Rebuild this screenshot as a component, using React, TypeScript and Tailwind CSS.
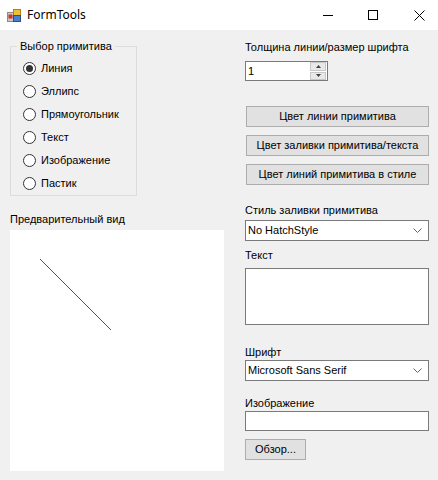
import React from "react";

function Radio({ label, checked }: { label: string; checked?: boolean }) {
  return (
    <div className="h-[23px] flex items-center">
      <div className="w-[13px] h-[13px] rounded-full border border-[#333333] bg-white flex items-center justify-center">
        {checked && <div className="w-[7px] h-[7px] rounded-full bg-[#333333]" />}
      </div>
      <span className="ml-[5px] text-[11px] leading-[13px]">{label}</span>
    </div>
  );
}

function Btn({ label, w }: { label: string; w: string }) {
  return (
    <div
      className={`${w} h-[21px] border border-[#adadad] bg-[#e1e1e1] flex items-center justify-center text-[11px] leading-[13px]`}
    >
      {label}
    </div>
  );
}

function Combo({ value }: { value: string }) {
  return (
    <div className="w-[184px] h-[21px] border border-[#7a7a7a] bg-white flex items-center justify-between pl-[2px] pr-[6px] text-[11px] leading-[13px]">
      <span>{value}</span>
      <svg width="9" height="5" viewBox="0 0 9 5">
        <path d="M0.5 0.5 L4.5 4.5 L8.5 0.5" fill="none" stroke="#606060" strokeWidth="1" />
      </svg>
    </div>
  );
}

export default function App() {
  return (
    <div
      className="w-[438px] h-[480px] bg-[#f0f0f0] flex flex-col text-black overflow-hidden"
      style={{ fontFamily: '"Liberation Sans", Arial, sans-serif' }}
    >
      {/* title bar */}
      <div className="h-[30px] bg-white flex items-center shrink-0">
        <svg className="ml-[7px]" width="14" height="13" viewBox="0 0 14 13">
          <rect x="0.5" y="3.5" width="7" height="9" fill="#c8c8c8" stroke="#8a8a8a" />
          <rect x="1.5" y="5.5" width="4" height="4" fill="#d83020" />
          <rect x="6.5" y="0.5" width="7" height="6" fill="#f0c030" stroke="#b08020" />
          <rect x="6.5" y="6.5" width="7" height="6" fill="#4a7fd0" stroke="#2a5090" />
        </svg>
        <span
          className="ml-[6px] text-[12px] leading-[16px]"
          style={{ fontFamily: '"Noto Sans", "Open Sans", sans-serif' }}
        >
          FormTools
        </span>
        <div className="ml-auto flex items-center h-full gap-[35px] pr-[13px]">
          <div className="w-[10px] h-[1px] bg-black" />
          <div className="w-[10px] h-[10px] border border-black" />
          <svg className="ml-[1px]" width="11" height="11" viewBox="0 0 11 11">
            <path d="M0.5 0.5 L10.5 10.5 M10.5 0.5 L0.5 10.5" stroke="#000" strokeWidth="1" />
          </svg>
        </div>
      </div>

      <div className="flex flex-1">
        {/* left column */}
        <div className="w-[235px] pl-[10px] flex flex-col">
          <div className="relative mt-[16px] w-[127px] h-[150px] border border-[#dcdcdc] pt-[10px] pl-[12px]">
            <span className="absolute top-[-7px] left-[6px] px-[3px] bg-[#f0f0f0] text-[11px] leading-[13px]">
              Выбор примитива
            </span>
            <Radio label="Линия" checked />
            <Radio label="Эллипс" />
            <Radio label="Прямоугольник" />
            <Radio label="Текст" />
            <Radio label="Изображение" />
            <Radio label="Пастик" />
          </div>
          <div className="mt-[17px] text-[11px] leading-[13px]">Предварительный вид</div>
          <div className="mt-[4px] w-[214px] h-[241px] bg-white">
            <svg width="214" height="241" viewBox="0 0 214 241" shapeRendering="crispEdges">
              <line x1="30" y1="29" x2="101" y2="100" stroke="#009000" strokeWidth="1" />
            </svg>
          </div>
        </div>

        {/* right column */}
        <div className="w-[184px] ml-[10px] flex flex-col text-[11px] leading-[13px]">
          <div className="mt-[11px]">Толщина линии/размер шрифта</div>
          <div className="mt-[7px] w-[83px] h-[20px] border border-[#7a7a7a] bg-white flex items-center">
            <span className="pl-[2px] flex-1">1</span>
            <div className="w-[16px] h-[18px] mr-[1px] flex flex-col gap-[1px]">
              <div className="flex-1 bg-[#e8e8e8] border border-[#c8c8c8] flex items-center justify-center">
                <svg width="5" height="3" viewBox="0 0 5 3">
                  <path d="M0 3 L2.5 0 L5 3 Z" fill="#404040" />
                </svg>
              </div>
              <div className="flex-1 bg-[#e8e8e8] border border-[#c8c8c8] flex items-center justify-center">
                <svg width="5" height="3" viewBox="0 0 5 3">
                  <path d="M0 0 L2.5 3 L5 0 Z" fill="#404040" />
                </svg>
              </div>
            </div>
          </div>
          <div className="ml-[1px] mt-[25px] flex flex-col gap-[8px]">
            <Btn w="w-[183px]" label="Цвет линии примитива" />
            <Btn w="w-[183px]" label="Цвет заливки примитива/текста" />
            <Btn w="w-[183px]" label="Цвет линий примитива в стиле" />
          </div>
          <div className="mt-[19px]">Стиль заливки примитива</div>
          <div className="mt-[3px]">
            <Combo value="No HatchStyle" />
          </div>
          <div className="mt-[8px]">Текст</div>
          <div className="mt-[6px] w-[184px] h-[57px] border border-[#7a7a7a] bg-white" />
          <div className="mt-[21px]">Шрифт</div>
          <div className="mt-[1px]">
            <Combo value="Microsoft Sans Serif" />
          </div>
          <div className="mt-[16px]">Изображение</div>
          <div className="mt-[1px] w-[184px] h-[20px] border border-[#7a7a7a] bg-white" />
          <div className="mt-[8px]">
            <Btn w="w-[61px]" label="Обзор..." />
          </div>
        </div>
      </div>
    </div>
  );
}
